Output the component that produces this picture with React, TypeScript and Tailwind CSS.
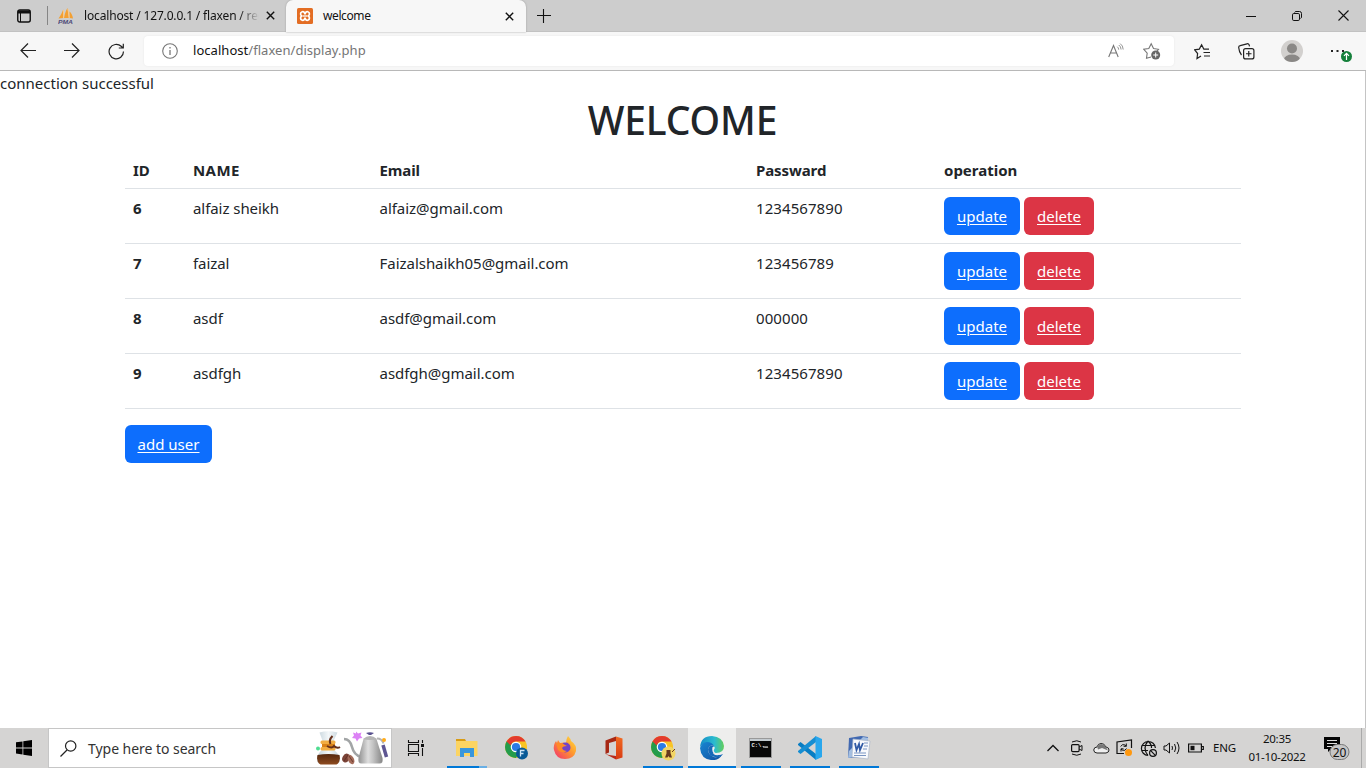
import type { ReactNode } from "react";

type User = { id: number; name: string; email: string; password: string };

const users: User[] = [
  { id: 6, name: "alfaiz sheikh", email: "alfaiz@gmail.com", password: "1234567890" },
  { id: 7, name: "faizal", email: "Faizalshaikh05@gmail.com", password: "123456789" },
  { id: 8, name: "asdf", email: "asdf@gmail.com", password: "000000" },
  { id: 9, name: "asdfgh", email: "asdfgh@gmail.com", password: "1234567890" },
];

function Svg({ w, h, children, className = "" }: { w: number; h: number; children: ReactNode; className?: string }) {
  return (
    <svg width={w} height={h} viewBox={`0 0 ${w} ${h}`} fill="none" stroke="none" className={"block shrink-0 " + className}>
      {children}
    </svg>
  );
}

function CloseIcon() {
  return (
    <Svg w={9} h={9}>
      <path d="M.8.8l7.400 7.400M8.200.8L.8 8.200" stroke="#111" strokeWidth="1.400" />
    </Svg>
  );
}

function TabBar() {
  return (
    <div className="flex h-8 items-stretch border-b border-[#c2c2c2] bg-[#cdcdcd] text-[12px] text-[#111]">
      <div className="flex w-[47px] items-center pl-[17px]">
        <Svg w={14} h={14}>
          <rect x=".75" y="1" width="12.5" height="12" rx="2" stroke="#111" strokeWidth="1.4" />
          <path d="M1 1.5h12v3H1z" fill="#111" />
          <path d="M3.5 4v9" stroke="#111" />
        </Svg>
      </div>
      <div className="my-1.5 w-px bg-[#858585]" />
      <div className="flex w-[238px] items-center pl-2.5">
        <Svg w={16} h={16}>
          <path d="M.5 10.500C3 7 4.200 4 5.200 1.500v8.500zM6 10C7 5 8 2 9.500 0l1.500 10zM11.500 10V3.500c2 1.500 3 4 3.500 7z" fill="#f3a033" />
          <path d="M5.500 2v8M10 1l1.200 9" stroke="#f9c98b" />
          <text x="0" y="15.500" fontSize="6" fontWeight="900" fontStyle="italic" textLength="15" lengthAdjust="spacingAndGlyphs" fontFamily="Liberation Sans, sans-serif" fill="#4d4b78">PMA</text>
        </Svg>
        <div className="ml-[10px] w-[175px] whitespace-nowrap bg-linear-to-r from-[#111] from-88% to-[#cdcdcd] bg-clip-text tracking-[-0.16px] text-transparent">localhost / 127.0.0.1 / flaxen / reg</div>
        <div className="ml-[7px]"><CloseIcon /></div>
      </div>
      <div className="-mb-px flex w-[240px] items-center rounded-t-[7px] bg-[#f7f7f7] pl-[11px] shadow-[0_0_2px_#999]">
        <Svg w={16} h={16}>
          <rect width="16" height="16" rx="1.500" fill="#e36d23" />
          <path d="M5.200 3.700c2.500-.7 2.300 2.200 2.800 2.200s.3-2.900 2.800-2.200c2.700.9 1.500 3.700.5 4.300 1 .6 2.200 3.400-.5 4.300-2.500.7-2.300-2.200-2.800-2.200s-.3 2.900-2.800 2.200C2.500 11.400 3.700 8.600 4.700 8c-1-.6-2.200-3.400.5-4.300z" stroke="#fff" strokeWidth="1.700" />
          <path d="M6 8h4" stroke="#fff" strokeWidth="1.300" />
        </Svg>
        <span className="ml-[10px] w-[182px] tracking-[-0.4px]">welcome</span>
        <CloseIcon />
      </div>
      <div className="flex items-center pl-[11px]">
        <Svg w={14} h={14}><path d="M6.500 0v14M0 6.500h14" stroke="#111" strokeWidth="1.100" /></Svg>
      </div>
      <div className="ml-auto flex items-center gap-9 pr-[17px]">
        <Svg w={10} h={10}><path d="M0 5.500h10" stroke="#111" /></Svg>
        <Svg w={10} h={10}>
          <rect x=".5" y="2.500" width="7" height="7" rx="1.300" stroke="#111" />
          <path d="M2.500 1.500Q3 .5 4 .5h3.500q2 0 2 2V6q0 1-1 1.500" stroke="#111" />
        </Svg>
        <Svg w={11} h={11}><path d="M.5.5l10 10M10.500.5l-10 10" stroke="#111" strokeWidth="1.100" /></Svg>
      </div>
    </div>
  );
}

function Toolbar() {
  return (
    <div className="flex h-[39px] items-center border-b border-[#b8b8b8] bg-[#f7f7f7] pl-5">
      <div className="flex gap-7">
        <Svg w={16} h={16}><path d="M16 7.500H1M8 .5l-7 7 7 7" stroke="#222" strokeWidth="1.200" /></Svg>
        <Svg w={16} h={16}><path d="M0 7.500h15M8 .5l7 7-7 7" stroke="#222" strokeWidth="1.200" /></Svg>
        <Svg w={17} h={17}><path d="M15.500 8.500A7.200 7.200 0 1 1 13.200 3.300L15 5M15.300.8V5h-4.500" stroke="#222" strokeWidth="1.200" /></Svg>
      </div>
      <div className="ml-[19px] flex h-[30px] w-[1030px] items-center rounded-[4px] bg-white pl-[18px] shadow-[0_0_2px_#e4e4e4]">
        <Svg w={16} h={16}>
          <circle cx="8" cy="8" r="7.300" stroke="#777" strokeWidth="1.100" />
          <path d="M8 7v5M8 4v1.500" stroke="#777" strokeWidth="1.300" />
        </Svg>
        <div className="ml-[15px] text-[13px] tracking-[0.04px] text-[#757575]"><span className="text-[#111]">localhost</span>/flaxen/display.php</div>
        <Svg w={16} h={16} className="ml-auto">
          <path d="M.7 14L5.500 2.500 10.200 14M2.300 10h6.400" stroke="#777" strokeWidth="1.100" />
          <path d="M9.300 3.700q1.300 1 1.400 3M10.800 2q2.200 1.500 2.300 4.500M12.200.6q2.900 2 3 5.900" stroke="#888" strokeWidth=".9" />
        </Svg>
        <Svg w={18} h={18} className="mr-[13px] ml-[19px]">
          <path d="M8 15l-4.500 1.300.7-5.200L.8 7.300l5-.8L8.200 1.700l2.300 4.800 5 .8-1.700 2" stroke="#777" strokeWidth="1.100" />
          <circle cx="12.700" cy="13" r="4.500" fill="#666" />
          <path d="M12.700 10.500v5M10.200 13h5" stroke="#fff" />
        </Svg>
      </div>
      <Svg w={17} h={17} className="ml-[20px]">
        <path d="M7 13l-4 2.500.6-5L.6 6.800l4.700-.7L7.600 1.700l2.200 4.400H15M9.500 9.500H16M10 13h6" stroke="#222" strokeWidth="1.200" />
      </Svg>
      <Svg w={17} h={17} className="ml-[27px]">
        <rect x="5.600" y="5.600" width="10.300" height="10.300" rx="2" stroke="#222" strokeWidth="1.200" />
        <path d="M10.750 8v5.500M8 10.750h5.500M3.500 12Q1 9 .7 4.500.6 3 2.200 2.700L9 .8q1.800-.5 2.300 1.500l.2 1" stroke="#222" strokeWidth="1.200" />
      </Svg>
      <Svg w={22} h={22} className="ml-[26px]">
        <clipPath id="avatar"><circle cx="11" cy="11" r="11" /></clipPath>
        <g clipPath="url(#avatar)">
          <rect width="22" height="22" fill="#d2d0ce" />
          <circle cx="11" cy="8.500" r="5" fill="#8a8886" />
          <ellipse cx="11" cy="19.500" rx="8" ry="5" fill="#8a8886" />
        </g>
      </Svg>
      <Svg w={22} h={22} className="ml-[28px]">
        <path d="M0 10h2v2H0zM5.500 10h2v2h-2zM11 10h2v2h-2z" fill="#222" />
        <circle cx="15.500" cy="16.500" r="5.500" fill="#15803b" />
        <path d="M15.500 20v-6.500M13 15.800l2.500-2.500 2.500 2.500" stroke="#fff" strokeWidth="1.200" />
      </Svg>
    </div>
  );
}

function Button({ children, className }: { children: ReactNode; className: string }) {
  return (
    <button className={"flex h-[38px] items-center justify-center rounded-[6px] text-[15px] tracking-[0.02px] text-white underline underline-offset-2 " + className}>
      {children}
    </button>
  );
}

function Page() {
  return (
    <main className="h-[657px] border-r border-[#c4c4c4] bg-white text-[15px] leading-6 text-[#212529]">
      <div>connection successful</div>
      <h1 className="mt-px text-center text-[39px] leading-12 font-medium tracking-[-0.15px]">WELCOME</h1>
      <div className="ml-[125px] w-[1116px]">
        <div className="grid h-[45px] grid-cols-[60px_186.5px_376.5px_188px_305px] items-end border-b border-[#dee2e6] pb-[6px] font-bold *:pl-2">
          <div>ID</div>
          <div className="tracking-[0.4px]">NAME</div>
          <div className="tracking-[-0.1px]">Email</div>
          <div className="tracking-[-0.1px]">Passward</div>
          <div>operation</div>
        </div>
        {users.map((u) => (
          <div key={u.id} className="grid h-[55px] grid-cols-[60px_186.5px_376.5px_188px_305px] border-b border-[#dee2e6] pt-[7px] *:pl-2">
            <div className="font-bold">{u.id}</div>
            <div className="tracking-[-0.06px]">{u.name}</div>
            <div className="tracking-[-0.03px]">{u.email}</div>
            <div className="tracking-[0.08px]">{u.password}</div>
            <div className="flex gap-1 pt-px">
              <Button className="w-[76px] bg-[#0d6efd]">update</Button>
              <Button className="w-[70px] bg-[#dc3545]">delete</Button>
            </div>
          </div>
        ))}
        <Button className="mt-4 w-[87px] bg-[#0d6efd]">add user</Button>
      </div>
    </main>
  );
}

function ChromeBase() {
  return (
    <>
      <circle cx="11" cy="11" r="11" fill="#f9c424" />
      <path d="M1.500 5.500A11 11 0 0 0 11 22l4.700-8.300L11 11z" fill="#249c4c" />
      <path d="M1.500 5.500l5 8.300L11 8z" fill="#249c4c" />
      <path d="M1.500 5.500A11 11 0 0 1 20.600 5.600H11a5.400 5.400 0 0 0-5.200 4z" fill="#e33b2e" />
      <circle cx="11" cy="11" r="5.300" fill="#fff" />
      <circle cx="11" cy="11" r="4.100" fill="#2c7be5" />
    </>
  );
}

function CoffeeArt() {
  return (
    <Svg w={74} h={34}>
      <defs>
        <linearGradient id="steel"><stop stopColor="#8f8f8f" /><stop offset=".4" stopColor="#dedede" /><stop offset=".6" stopColor="#c4c4c4" /><stop offset="1" stopColor="#858585" /></linearGradient>
        <linearGradient id="brew" x2="0" y2="1"><stop stopColor="#55280f" /><stop offset="1" stopColor="#8e4b1f" /></linearGradient>
        <linearGradient id="glass"><stop stopColor="#c3d2da" /><stop offset=".5" stopColor="#f3f7f9" /><stop offset="1" stopColor="#c3d2da" /></linearGradient>
      </defs>
      <path d="M4.500 1.500Q13-1 22.500 1.500L18 11v7q7 6 7 10-.5 5-4 5H6q-4 0-4-5 0-5 6-10v-7z" fill="url(#glass)" />
      <path d="M2.500 24q11-2 22 0 1.500 7-3 9.500H5.500Q1 31 2.500 24z" fill="url(#brew)" />
      <path d="M7 10h13v9H7z" fill="#d98218" />
      <rect x="5.500" y="9.500" width="15" height="3.500" rx="1.500" fill="#f2ad43" />
      <rect x="5.500" y="16" width="15" height="3.500" rx="1.500" fill="#f2ad43" />
      <path d="M17.500 5q-4 4-2 8M12 15q5 3 7 0 3 3 6 1" stroke="#66301b" strokeWidth="2" />
      <circle cx="3" cy="17.500" r="2" fill="#4fdd92" />
      <path d="M41 .5l2 2 3.500-1-1 3 2 2.500-3.500.5-2 3-1.500-3-3.500-.5 2-2.500-1-3 3 1z" fill="#dc82f5" />
      <path d="M29 8q6 0 8 8t9 10" stroke="#a2a5a6" strokeWidth="2.600" />
      <path d="M48.500 8q6.500-3.500 13 0l6 19q1 5.500-3 5.500H46.500q-4 0-3-5.500z" fill="url(#steel)" />
      <path d="M48 8q7-6 14 0-7 2-14 0z" fill="#b5b5b5" />
      <path d="M51 2q4-1.500 8 0l-3 2h-2z" fill="#58508e" />
      <path d="M62 7.500q5 0 6.500 5" stroke="#b4b4b4" strokeWidth="2" />
      <path d="M68 14l3.500 12" stroke="#5e5692" strokeWidth="3.500" />
      <circle cx="69" cy="9" r="2" fill="#ffab18" />
      <ellipse cx="31" cy="27" rx="3.500" ry="4.500" fill="#7a4337" transform="rotate(30 31 27)" />
      <ellipse cx="36" cy="28.500" rx="3" ry="5" fill="#a36b59" transform="rotate(-25 36 28.500)" />
      <path d="M29 30l4-6M34 25l4 6" stroke="#5d2d23" strokeWidth=".8" />
    </Svg>
  );
}

function Task({ children, bar = "", className = "" }: { children: ReactNode; bar?: string; className?: string }) {
  return (
    <div className={"grid h-10 w-[49px] shrink-0 grid-rows-[38px_2px] justify-items-center " + className}>
      <div className="flex items-center pt-px">{children}</div>
      <div className={"w-10 " + bar} />
    </div>
  );
}

function Taskbar() {
  return (
    <footer className="flex h-10 items-stretch bg-[#d5d4d3] text-[#111]">
      <div className="flex w-12 items-center justify-center">
        <Svg w={16} h={16}><path d="M0 2.300l6.500-.9v6.100H0zM7.300 1.300L16 0v7.500H7.300zM0 8.400h6.500v6.100L0 13.600zM7.300 8.400H16V16l-8.700-1.300z" fill="#000" /></Svg>
      </div>
      <div className="flex w-[344px] items-center border border-[#c6c6c6] bg-white pl-[11px]">
        <Svg w={17} h={17}>
          <circle cx="10.700" cy="6" r="5.200" stroke="#222" strokeWidth="1.200" />
          <path d="M7 10l-6.500 6.500" stroke="#222" strokeWidth="1.200" />
        </Svg>
        <span className="ml-[11px] text-[14px] tracking-[-0.04px] text-[#333]">Type here to search</span>
        <div className="mr-[2px] ml-auto"><CoffeeArt /></div>
      </div>
      <div className="flex w-[50px] items-center pl-[15px]">
        <Svg w={18} h={16}>
          <path d="M1.500 0v2.500h10V0M1.500 16v-2.500h10V16M1.500 4.500h10v7h-10zM15.500 0v3M15.500 8v8" stroke="#111" strokeWidth="1.100" />
          <path d="M14 4h3v3h-3z" fill="#111" />
        </Svg>
      </div>
      <Task bar="bg-linear-to-r from-[#0078d7] from-80% to-[#69afe5] to-80%">
        <Svg w={22} h={20}>
          <path d="M0 1h9l1 2H0z" fill="#d99c14" />
          <path d="M0 3h21.500v15H0z" fill="#fcd462" />
          <path d="M4 10h14v9h-4v-4H8v4H4z" fill="#3996dc" />
        </Svg>
      </Task>
      <Task>
        <Svg w={24} h={24}>
          <g transform="translate(1 0)"><ChromeBase /></g>
          <circle cx="18" cy="17.500" r="6" fill="#075996" />
          <path d="M16.500 20.500v-6h4M16.500 17.500h3" stroke="#cde4f5" strokeWidth="1.300" />
        </Svg>
      </Task>
      <Task>
        <Svg w={24} h={24}>
          <defs>
            <linearGradient id="fox" x1="1" y1="0" x2="0" y2="1"><stop stopColor="#ffe443" /><stop offset=".45" stopColor="#ff982e" /><stop offset="1" stopColor="#f12d72" /></linearGradient>
          </defs>
          <path d="M15 0q3 3 3 5 6 4 5 10-2 8-11 8T1 14Q0 9 3 5l1 2 1-3 2 3q4-1 6 0 0-4 2-7z" fill="url(#fox)" />
          <circle cx="12.500" cy="11.500" r="5" fill="#7344c8" />
          <path d="M3 7q6-1 9 2l2 1q-4 0-5 2 1 3 5 3-5 3-9-1z" fill="#ff8a27" />
        </Svg>
      </Task>
      <Task>
        <Svg w={20} h={24}>
          <defs>
            <linearGradient id="office" x2="0" y2="1"><stop stopColor="#f26a21" /><stop offset="1" stopColor="#d83b12" /></linearGradient>
          </defs>
          <path d="M12 .5l6.500 2v19L12 23.500z" fill="url(#office)" />
          <path d="M12 .5L1.500 4.500V18L5 16.500V7l7-2z" fill="#a72814" />
          <path d="M1.500 18l10.500 5.500V20l-7-1z" fill="#b82b1b" />
        </Svg>
      </Task>
      <Task bar="bg-[#0078d7]">
        <Svg w={26} h={26}>
          <g transform="translate(1 1)"><ChromeBase /></g>
          <circle cx="18.500" cy="18.500" r="7" fill="#f2d565" />
          <path d="M22 17l3-3" stroke="#69391e" />
          <path d="M16.500 15h4v3l1.500 4.500h-2.500l-1-1.500-1 1.500H15l1.500-4z" fill="#69391e" />
        </Svg>
      </Task>
      <Task className="-mr-px ml-px !w-12 !grid-cols-[48px] bg-[#eeeeed]" bar="!w-12 bg-[#0078d7]">
        <Svg w={24} h={24}>
          <defs>
            <linearGradient id="edgeTop"><stop stopColor="#168cc6" /><stop offset=".6" stopColor="#2bbbd0" /><stop offset="1" stopColor="#63ce5b" /></linearGradient>
            <linearGradient id="edgeBase" x2="1" y2="1"><stop stopColor="#1886d2" /><stop offset="1" stopColor="#1150a0" /></linearGradient>
          </defs>
          <path d="M0 11Q1 0 12 0q11 1 12 10 0 7-8 7-4 0-3-2 3-3 0-6Q6 4 0 11z" fill="url(#edgeTop)" />
          <path d="M0 12q2-6 7-6 5 0 7 4-4-2-6 3 0 6 6 8 4 1 8-2-4 6-11 5Q1 23 0 12z" fill="url(#edgeBase)" />
          <path d="M8 13q2-5 6-3-3 4 1 7-3 1-3-1 2 5 11 2-3 4-8 3-7-1-7-8z" fill="#1669b8" />
          <path d="M12.500 11q2-1 2 1-2 3 1 5 4 1 8-1l-1 2q-5 2-8 0-3-2-2-7z" fill="#eee" />
        </Svg>
      </Task>
      <Task className="ml-px" bar="bg-[#0078d7]">
        <Svg w={23} h={20}>
          <rect x=".5" y=".5" width="22" height="19" fill="#080808" stroke="#999" />
          <path d="M1 1h21v2H1z" fill="#c4cbd0" />
          <text x="2.500" y="9" fontSize="5.500" fontWeight="bold" fontFamily="Liberation Mono, monospace" fill="#eee">C:\._</text>
          <path d="M14 9h5" stroke="#eee" />
        </Svg>
      </Task>
      <Task bar="bg-[#0078d7]">
        <Svg w={24} h={24}>
          <path d="M0 8l2.500-2L18 18v6L0 9z" fill="#087dc3" />
          <path d="M0 16l2.500 2L18 6V0L0 15z" fill="#168ed2" />
          <path d="M17.500 0L24 3v18l-6.500 3z" fill="#29a7ed" />
        </Svg>
      </Task>
      <Task bar="bg-[#0078d7]">
        <Svg w={24} h={24}>
          <path d="M2 2L14 0l7 1-3 20-17 1z" fill="#4169b1" />
          <path d="M2 15L16 1l6 1-15 19-6 1z" fill="#bcd3ed" opacity=".8" />
          <path d="M6 3l17 2-2 18-16-2z" fill="#f8f9fc" stroke="#a7b4c9" strokeWidth=".7" />
          <path d="M8 7l1.500 7L12 8l1 6 3-7" stroke="#315aa5" strokeWidth="1.800" />
          <path d="M17 7h4M17 10h4M16 13h4M7 17h12M7 19.500h12" stroke="#7894c2" />
        </Svg>
      </Task>
      <div className="ml-auto flex items-center">
        <Svg w={12} h={8}><path d="M.5 7L6 1.500 11.500 7" stroke="#111" strokeWidth="1.300" /></Svg>
        <Svg w={12} h={16} className="ml-3">
          <rect x=".6" y="4.600" width="7.500" height="7" rx="1" stroke="#111" strokeWidth="1.200" />
          <path d="M8 7l3-1.500v5L8 9M1 2q5-2.500 9 0M1 14q5 2.500 9 0" stroke="#111" />
        </Svg>
        <Svg w={17} h={12} className="ml-[10px]">
          <path d="M4 11h9q3-.5 3-3t-3-3Q11 1 8 1.500 5 1.500 4 5 1 5 .7 8q.3 3 3.300 3z" fill="#eee" stroke="#222" />
          <path d="M4 4.500Q8-.5 12.500 4.500L15 8.500 9 6 5 7.500z" fill="#777" />
        </Svg>
        <Svg w={18} h={18} className="ml-[6px]">
          <path d="M8 14.500H1V3l14.500-2V9" stroke="#111" strokeWidth="1.200" />
          <path d="M4.700 7.500q1.300-3 4.500-1.500l1 1.200M10.300 4.500v2.800H7.600M10.500 9.500q-1.300 3-4.500 1.500l-1-1M5 12.500V9.800h2.500" stroke="#111" />
          <circle cx="12.500" cy="13.500" r="3.500" fill="#ff980f" />
        </Svg>
        <Svg w={18} h={17} className="ml-[6px]">
          <path d="M15.400 8A7 7 0 1 0 8 15.500M8 1Q2 8 8 15.500M8 1q4 4 3.500 7M1.500 5.500h13M1.500 10.500H8" stroke="#111" strokeWidth="1.200" />
          <circle cx="13" cy="13" r="3.400" stroke="#111" strokeWidth="1.200" />
          <path d="M10.700 10.700l4.600 4.600" stroke="#111" strokeWidth="1.200" />
        </Svg>
        <Svg w={18} h={14} className="ml-[5px]">
          <path d="M1 5h2l3.500-3v10L3 9H1zM9 5q1 2 0 4M11.500 3q2.500 4 0 8M14 1q4 6 0 12" stroke="#111" />
        </Svg>
        <Svg w={16} h={10} className="ml-[7px]">
          <path d="M.6 1h12.800v8H.6zM14 3.500h1.300v3H14" stroke="#111" strokeWidth="1.200" />
          <path d="M2.500 2.800h4v4.400h-4z" fill="#111" />
        </Svg>
        <span className="ml-[9px] w-[24px] text-[11.500px] tracking-[-0.2px]">ENG</span>
        <div className="ml-[10px] w-[60px] text-center text-[11.500px] leading-[18px] tracking-[-0.3px] whitespace-nowrap">
          <div>20:35</div>
          <div>01-10-2022</div>
        </div>
        <Svg w={27} h={26} className="ml-[17px]">
          <path d="M0 2h16v12H7l-3 3v-3H0z" fill="#050505" />
          <path d="M3 5.500h10M3 8.500h10M3 11.500h5" stroke="#ddd" />
          <rect x="6" y="9.500" width="19" height="15" rx="7.500" fill="#c6c6c6" stroke="#777" />
          <text x="15.500" y="21.500" fontSize="12" textAnchor="middle" fontFamily="Noto Sans, sans-serif" fill="#111">20</text>
        </Svg>
        <div className="mr-1 ml-[10px] h-10 w-px bg-[#aaa]" />
      </div>
    </footer>
  );
}

export default function App() {
  return (
    <div className="h-[768px] w-[1366px] overflow-hidden bg-white font-['Noto_Sans','Open_Sans',sans-serif]">
      <TabBar />
      <Toolbar />
      <Page />
      <Taskbar />
    </div>
  );
}
